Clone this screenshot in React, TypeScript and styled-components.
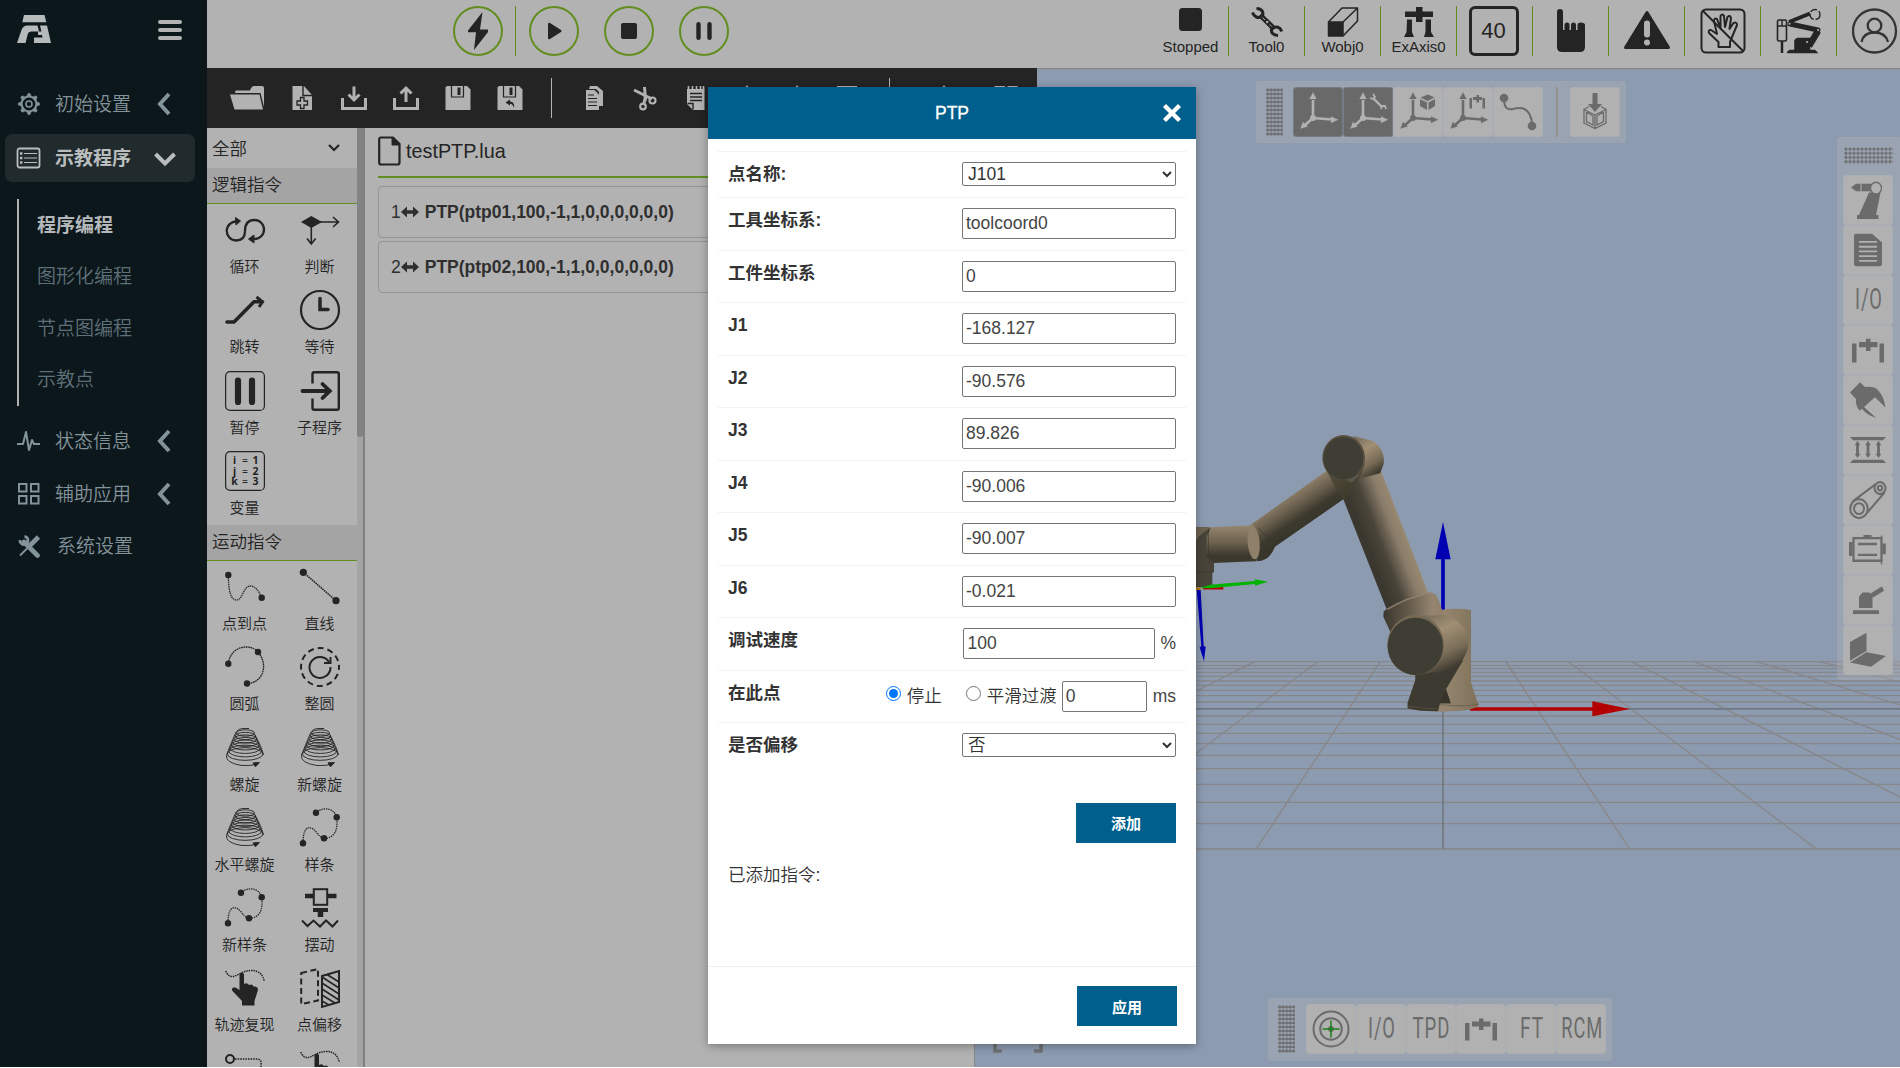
import React from "react";
import styled, { createGlobalStyle } from "styled-components";

const INK = "#242424";
const PANEL = "#b2b2b2";
const GREEN = "#628e20";
const BLUE = "#005f8c";
const ICON_GREY = "#6b6b6b";

const GlobalStyle = createGlobalStyle`
  * { box-sizing: border-box; }
  html, body { margin: 0; padding: 0; background: #fff; overflow: hidden; }
  body { font-family: "Liberation Sans", "Noto Sans CJK SC", sans-serif; color: ${INK}; }
`;

const Shell = styled.div`
  display: flex;
  width: 1900px;
  height: 1067px;
  overflow: hidden;
  position: relative;
`;

/* ---------- sidebar ---------- */
const Sidebar = styled.aside`
  width: 207px;
  flex: none;
  background: #0c171c;
  display: flex;
  flex-direction: column;
`;
const Brand = styled.div`
  height: 76px;
  padding: 15px 25px 0 17px;
  display: flex;
  justify-content: space-between;
  align-items: flex-start;
`;
const Burger = styled.div`
  margin-top: 5px;
  width: 24px;
  height: 20px;
  display: flex;
  flex-direction: column;
  justify-content: space-between;
  span { height: 4px; border-radius: 2px; background: #b2b2b2; }
`;
const NavItem = styled.div<{ $active?: boolean; $h: number }>`
  height: ${(p) => p.$h}px;
  margin: ${(p) => (p.$active ? 2 : 0)}px 12px 0 5px;
  padding-left: 11px;
  display: flex;
  align-items: center;
  border-radius: 7px;
  font-size: 19px;
  background: ${(p) => (p.$active ? "#212b2d" : "transparent")};
  color: ${(p) => (p.$active ? "#b9bdbe" : "#83939a")};
  font-weight: ${(p) => (p.$active ? 700 : 350)};
`;
const NavLabel = styled.span<{ $shift?: number }>`
  margin: -3px 0 0 ${(p) => 13 + (p.$shift || 0)}px;
  width: ${(p) => 98 - (p.$shift || 0)}px;
  white-space: nowrap;
`;
const SubNav = styled.div`
  margin: 17px 0 9px 17px;
  height: 207px;
  border-left: 2px solid #b2b2b2;
  padding: 1px 0 0 18px;
  display: flex;
  flex-direction: column;
`;
const SubItem = styled.div<{ $active?: boolean }>`
  height: 51.3px;
  line-height: 51px;
  font-size: 19px;
  color: ${(p) => (p.$active ? "#b4b8b9" : "#5f7178")};
  font-weight: ${(p) => (p.$active ? 700 : 350)};
`;

/* ---------- header ---------- */
const Main = styled.div`
  flex: 1;
  min-width: 0;
  display: flex;
  flex-direction: column;
`;
const Header = styled.header`
  height: 68px;
  flex: none;
  background: ${PANEL};
  display: flex;
  overflow: hidden;
  padding-top: 6px;
`;
const RunControls = styled.div`
  width: 946px;
  flex: none;
  padding-left: 246px;
  display: flex;
  height: 50px;
`;
const RoundButton = styled.div<{ $gap: number }>`
  width: 50px;
  height: 50px;
  flex: none;
  margin-left: ${(p) => p.$gap}px;
  border: 2px solid ${GREEN};
  border-radius: 50%;
  display: flex;
  align-items: center;
  justify-content: center;
`;
const GreenRule = styled.div`
  width: 1px;
  height: 50px;
  margin-left: 12px;
  background: ${GREEN};
`;
const StatusItem = styled.div<{ $last?: boolean }>`
  width: 76px;
  height: 50px;
  flex: none;
  display: flex;
  flex-direction: column;
  align-items: center;
  border-right: 1px solid ${(p) => (p.$last ? "transparent" : GREEN)};
  font-size: 15px;
`;
const StatusIcon = styled.div<{ $h: number }>`
  height: ${(p) => p.$h}px;
  display: flex;
  align-items: center;
  justify-content: center;
`;
const StatusText = styled.div`
  line-height: 19px;
  white-space: nowrap;
`;
const SpeedBox = styled.div`
  width: 50px;
  height: 50px;
  margin-right: 2px;
  border: 3px solid ${INK};
  border-radius: 6px;
  font-size: 22px;
  line-height: 43px;
  text-align: center;
`;

/* ---------- workspace ---------- */
const Workspace = styled.div`
  flex: 1;
  min-height: 0;
  display: flex;
`;
const Editor = styled.section`
  width: 768px;
  flex: none;
  display: flex;
  flex-direction: column;
  position: relative;
  z-index: 1;
`;
const Toolbar = styled.div`
  width: 830px;
  height: 60px;
  flex: none;
  background: ${INK};
  padding: 0 0 1px 14px;
  display: flex;
  align-items: center;
`;
const Tool = styled.div<{ $w: number }>`
  width: ${(p) => p.$w}px;
  flex: none;
  display: flex;
  justify-content: center;
`;
const ToolRule = styled.div`
  width: 1px;
  height: 40px;
  background: ${PANEL};
`;
const EditorBody = styled.div`
  flex: 1;
  min-height: 0;
  display: flex;
  background: ${PANEL};
  border-right: 1px solid #868686;
`;
const Palette = styled.div`
  width: 150px;
  flex: none;
  overflow: hidden;
`;
const Filter = styled.div`
  height: 40px;
  padding: 0 17px 2px 5px;
  display: flex;
  align-items: center;
  justify-content: space-between;
  font-size: 17.5px;
  font-weight: 350;
  svg { margin-top: 2px; }
`;
const SectionTitle = styled.div`
  height: 36px;
  padding-left: 5px;
  line-height: 34px;
  font-size: 17.5px;
  font-weight: 350;
  background: #a4a4a4;
  border-bottom: 1px solid ${GREEN};
`;
const Blocks = styled.div`
  display: grid;
  grid-template-columns: 75px 75px;
  grid-auto-rows: 80.25px;
`;
const Block = styled.div`
  display: flex;
  flex-direction: column;
  align-items: center;
  padding-top: 6px;
  font-size: 15px;
  font-weight: 350;
  line-height: 20px;
  white-space: nowrap;
  gap: 7px;
`;
const ScrollTrack = styled.div`
  width: 8px;
  flex: none;
  background: #a4a4a4;
  border-right: 2px solid #7f7f7f;
`;
const ScrollThumb = styled.div`
  height: 309px;
  width: 6px;
  background: #838383;
  border-radius: 0 0 3px 3px;
`;
const Program = styled.div`
  flex: 1;
  padding-left: 13px;
`;
const FileTab = styled.div`
  height: 50px;
  border-bottom: 2px solid ${GREEN};
  display: flex;
  align-items: center;
  gap: 4px;
  font-size: 19.8px;
  padding-bottom: 2px;
`;
const CodeLine = styled.div`
  height: 52px;
  margin-top: 3px;
  border: 1px solid #93939b;
  border-radius: 4px;
  display: flex;
  align-items: center;
  padding-left: 12px;
  font-size: 17.5px;
  color: #2f2f2f;
  &:first-of-type { margin-top: 0; }
  svg { margin-right: 6px; }
`;
const Lines = styled.div`
  padding-top: 8px;
`;

/* ---------- 3D view ---------- */
const Viewport = styled.section`
  flex: 1;
  position: relative;
  background: #8d9bb1;
  border-top: 1px solid #858585;
  overflow: hidden;
`;
const Scene = styled.svg`
  display: block;
`;
const FloatBar = styled.div<{ $x: number; $y: number; $w: number; $h: number; $col?: boolean }>`
  position: absolute;
  left: ${(p) => p.$x}px;
  top: ${(p) => p.$y}px;
  width: ${(p) => p.$w}px;
  height: ${(p) => p.$h}px;
  background: rgba(178, 178, 178, 0.35);
  border-radius: 3px;
  display: flex;
  flex-direction: ${(p) => (p.$col ? "column" : "row")};
  padding: ${(p) => (p.$col ? "10px 0 0 6px" : "6px 0 0 10px")};
`;
const Grip = styled.div<{ $col?: boolean; $gap?: number }>`
  flex: none;
  width: ${(p) => (p.$col ? 49 : 17)}px;
  height: ${(p) => (p.$col ? 17 : 48)}px;
  margin: ${(p) => (p.$col ? "0 0 11px 1px" : `1px ${p.$gap || 10}px 0 0`)};
  background-image: radial-gradient(circle at 50% 50%, #707072 1.3px, transparent 1.9px);
  background-size: ${(p) => (p.$col ? "4px 4.2px" : "3.5px 4px")};
`;
const Key = styled.div<{ $on?: boolean; $tall?: boolean }>`
  width: 50px;
  height: 50px;
  flex: none;
  border: 1px solid ${(p) => (p.$on ? "#777b83" : "#abaeb3")};
  border-radius: 3px;
  background: ${(p) => (p.$on ? "#696969" : "#b1b1b1")};
  color: ${ICON_GREY};
  display: flex;
  align-items: center;
  justify-content: center;
  svg { transform: ${(p) => (p.$tall ? "scaleY(1.08)" : "none")}; }
`;
const KeyRule = styled.div`
  width: 2px;
  height: 50px;
  margin: 0 12px 0 13px;
  background: #93918f;
`;
const KeyText = styled.span<{ $sx: number }>`
  font-family: Roboto, "Liberation Sans", sans-serif;
  font-size: 29.5px;
  line-height: 1;
  letter-spacing: 1.5px;
  padding-left: 3px;
  transform: scaleX(${(p) => p.$sx});
`;

/* ---------- dialog ---------- */
const Dialog = styled.div`
  position: absolute;
  left: 708px;
  top: 87px;
  width: 488px;
  height: 957px;
  z-index: 5;
  background: #fff;
  box-shadow: 0 2px 9px rgba(0, 0, 0, 0.32);
  color: #333;
  font-size: 17.5px;
  display: flex;
  flex-direction: column;
`;
const DialogHead = styled.div`
  height: 52px;
  flex: none;
  background: ${BLUE};
  color: #fff;
  display: grid;
  grid-template-columns: 48px 1fr 48px;
  align-items: center;
  text-align: center;
  -webkit-text-stroke: 0.3px #fff;
  svg { justify-self: center; }
`;
const Form = styled.div`
  flex: 1;
  padding: 11.6px 10px 0;
`;
const Row = styled.div<{ $h?: number }>`
  height: ${(p) => p.$h || 52.5}px;
  border-top: 1px solid #f3f3f3;
  padding: 10px 10px 0;
  display: flex;
  justify-content: space-between;
`;
const Label = styled.label`
  font-weight: 700;
  line-height: 25px;
`;
const Input = styled.input<{ $w?: number }>`
  width: ${(p) => p.$w || 214}px;
  height: 31px;
  border: 1px solid #767676;
  border-radius: 2px;
  padding: 0 3px;
  font: inherit;
  color: #444;
  background: #fff;
  outline: none;
`;
const Select = styled.select`
  width: 214px;
  height: 24px;
  border: 1px solid #767676;
  border-radius: 2px;
  padding: 0 0 2px 1px;
  font: inherit;
  font-weight: 350;
  color: #333;
  background-color: #fff;
`;
const Field = styled.div`
  display: flex;
  align-items: flex-start;
  line-height: 31px;
  font-weight: 350;
`;
const Unit = styled.span<{ $l: number }>`
  margin-left: ${(p) => p.$l}px;
  color: #444;
`;
const Radio = styled.input`
  width: 15px;
  height: 15px;
  margin: 5px 6px 0 0;
`;
const Button = styled.button`
  width: 100px;
  height: 40px;
  border: 0;
  padding: 0;
  background: ${BLUE};
  color: #fff;
  font: 700 15px "Liberation Sans", "Noto Sans CJK SC", sans-serif;
`;
const AddRow = styled.div`
  display: flex;
  justify-content: flex-end;
  padding: 28px 10px 0;
`;
const Added = styled.div`
  padding: 19px 10px 0;
  line-height: 26px;
  font-weight: 350;
`;
const DialogFoot = styled.div`
  height: 78px;
  flex: none;
  border-top: 1px solid #f1f1f1;
  padding: 19px 19px 0 0;
  display: flex;
  justify-content: flex-end;
`;

/* ---------- icons ---------- */
type IconProps = { w: number; h?: number; children: React.ReactNode };
const Icon = ({ w, h = w, children }: IconProps) => (
  <svg width={w} height={h} viewBox={`0 0 ${w} ${h}`} fill="none" stroke="currentColor">
    {children}
  </svg>
);

const Chevron = ({ down }: { down?: boolean }) => (
  <Icon w={24}>
    <path d={down ? "M2.500 8 L12 17.500 L21.500 8" : "M16 2 L7 12 L16 22"} strokeWidth="4" />
  </Icon>
);

const Gear = () => (
  <Icon w={26} h={24}>
    <circle cx="13" cy="12" r="7.4" strokeWidth="2" />
    <circle cx="13" cy="12" r="3" strokeWidth="1.6" />
    {[0, 45, 90, 135, 180, 225, 270, 315].map((a) => (
      <path key={a} d="M10.8 4.6 L12 1.4 H14 L15.2 4.6z" fill="currentColor" strokeWidth=".6" transform={`rotate(${a} 13 12)`} />
    ))}
  </Icon>
);
const ListIcon = () => (
  <Icon w={26} h={22}>
    <rect x="1.5" y="1.5" width="22" height="19" rx="2" strokeWidth="1.8" />
    <path d="M8 6.5 H21 M8 11 H21 M8 15.5 H21" strokeWidth="1" />
    <path d="M4 6.5 h2.4 M4 11 h2.4 M4 15.5 h2.4" strokeWidth="2.4" />
  </Icon>
);
const Pulse = () => (
  <Icon w={26} h={24}>
    <path d="M1 15 H7 L10 3 L13 21 L16 11 L18 15 H24" strokeWidth="2" strokeLinejoin="round" />
  </Icon>
);
const Tiles = () => (
  <Icon w={26} h={24}>
    {[[3, 2], [15, 2], [3, 14], [15, 14]].map(([x, y]) => (
      <rect key={`${x}-${y}`} x={x} y={y} width="7.5" height="7.5" strokeWidth="2" />
    ))}
  </Icon>
);
const Tools = () => (
  <Icon w={26} h={24}>
    <path d="M8 8 L21.500 21.500" strokeWidth="4.600" strokeLinecap="round" />
    <path d="M4 6 A4 4 0 1 0 8.500 2.500" strokeWidth="3" />
    <path d="M4 21.500 L13 12.500" strokeWidth="1.800" />
    <path d="M13.500 12 L22.500 3" strokeWidth="4.600" />
  </Icon>
);

const Logo = () => (
  <svg width="34" height="28" viewBox="0 0 34 28" fill="#b6babb">
    <path d="M7 0 H27.500 L29.300 7.300 H5.300z" />
    <path d="M0 28 L4.500 15 Q6 10.500 10.500 10.500 H20.500 L22 16.500 H14 Q11.500 16.500 10.800 19 L8.500 28z" />
    <path d="M23 10.500 H30 L34 28 H17 V22.500 H25.500 L25 20 H21 V16.500 H24.400z" />
  </svg>
);

const Bolt = () => (
  <svg width="24" height="38" viewBox="0 0 24 38" fill={INK}>
    <path d="M16.5 0 L2 18.5 V20.3 H10 L8 38 L22 20 V17.6 H14z" />
  </svg>
);

const Wrench = () => (
  <svg width="32" height="30" viewBox="0 0 32 30" fill="none" stroke={INK}>
    <path d="M9 8 L23.500 22" strokeWidth="5.200" />
    <path d="M5.500 1.500 Q13.500 2 11.500 9.500 Q4 12.500 1.500 5.500" strokeWidth="3" />
    <path d="M27 28.500 Q19.500 28 20.500 21.500 Q28 17.500 30.800 24.500" strokeWidth="3" />
    <circle cx="16.200" cy="15" r="1.200" fill={PANEL} stroke="none" />
    <path d="M11.500 10.700 l2.500 2.300 M18.700 17.500 l2 2" stroke={PANEL} strokeWidth="1" />
  </svg>
);
const Cube = () => (
  <svg width="32" height="30" viewBox="0 0 32 30" fill="none" stroke={INK} strokeWidth="1.5" strokeLinejoin="round">
    <path d="M1.5 15 H16 V29 H1.5z" fill={INK} />
    <path d="M1.5 15 L15 1 H30.5 L16 15 M30.5 1 V14 L16 29" />
  </svg>
);
const Gantry = () => (
  <svg width="32" height="30" viewBox="0 0 32 30" fill={INK}>
    <path d="M2 4.5 H13 V0 H19.5 V4.5 H30 V10 H19.5 V15 H13 V10 H2z" />
    <path d="M4 12.5 H9 V25 L11 30 H1 L3.5 25z M22.5 12.5 H28 V25 L31 30 H21 L22.5 25z" />
  </svg>
);
const PointHand = () => (
  <svg width="30" height="46" viewBox="0 0 30 46" fill={INK}>
    <path d="M1 4 Q1 1 4 1 Q7 1 7 4 V22 H8.5 V17 Q8.500 14.500 11 14.500 Q13.500 14.500 13.500 17 V22 H15 V17 Q15 14.500 17.500 14.500 Q20 14.500 20 17 V22 H21.500 V17 Q21.500 14.500 24.500 14.500 Q29 14.500 29 17 V39 Q29 44 24 44 H6 Q1 44 1 39z" />
  </svg>
);
const Warning = () => (
  <svg width="48" height="40" viewBox="0 0 48 40">
    <path d="M24 2.500 L45.500 37.500 H2.500z" fill={INK} stroke={INK} strokeWidth="3" strokeLinejoin="round" />
    <rect x="21" y="10.500" width="6" height="17" rx="3" fill={PANEL} />
    <circle cx="24" cy="32.500" r="3" fill={PANEL} />
  </svg>
);
const NoHand = () => (
  <svg width="46" height="46" viewBox="0 0 46 46" fill="none" stroke={INK} strokeWidth="2" strokeLinejoin="round">
    <rect x="1.500" y="1.500" width="43" height="43" rx="4.500" />
    <path d="M18.500 39 V34 L9 25 Q8 21.500 11 22 L17 26 L14 13 Q14 9.500 17 11 L20.500 20 L20.500 8 Q22.500 5 24 8 L25 19 L27.500 9 Q30 6.500 31 10 L29.500 21 L33.500 15 Q37 13.500 37 17 L30 34 V39z" />
    <path d="M2.500 2.500 L43.500 43.500" />
  </svg>
);
const ArmIcon = () => (
  <svg width="46" height="46" viewBox="0 0 46 46" fill={INK} stroke={INK}>
    <rect x="1.500" y="12" width="9" height="21" rx="1.500" fill="none" strokeWidth="1.600" />
    <path d="M1.500 18 H10.500 M6 12 V18" strokeWidth="1.400" fill="none" />
    <path d="M6 33 V45" strokeWidth="2.500" />
    <path d="M13 14 L34 5.500" strokeWidth="4" />
    <path d="M14 16 L42 22" strokeWidth="5" strokeLinecap="round" />
    <path d="M42 23 L33 38" strokeWidth="6.500" />
    <circle cx="39" cy="6.500" r="5" fill="none" strokeWidth="1.400" strokeDasharray="7 2" />
    <path d="M18.500 32 L21 30 H34 V42 H18.500z M12 43 L14 42 H39 L42 45 H11z" strokeWidth=".5" />
    <path d="M13.500 15.800 h.1 M42 22 h.1 M31 34 h.1" stroke={PANEL} strokeWidth="2" strokeLinecap="round" />
  </svg>
);
const User = () => (
  <svg width="46" height="46" viewBox="0 0 46 46" fill="none" stroke="#333" strokeWidth="2.300">
    <circle cx="22.500" cy="23" r="21.500" />
    <circle cx="22.500" cy="17.500" r="6.800" />
    <path d="M9.500 34 Q11.500 24.500 22.500 24.500 Q33.500 24.500 36 34" />
  </svg>
);

/* editor toolbar icons share a 34x26 frame */
const TB = ({ children }: { children: React.ReactNode }) => (
  <svg width="34" height="26" viewBox="0 0 34 26" fill={PANEL} stroke="none">
    {children}
  </svg>
);
const Disk = ({ undo }: { undo?: boolean }) => (
  <TB>
    <path d="M6 1 H26 L29.500 4.500 V25 H4.500 V2.500z" />
    <path d="M10.500 1 V12 H22.500 V1" fill="none" stroke={INK} strokeWidth="1.200" />
    <path d="M16.500 2.500 H19.500 V10 H16.500z" fill={INK} />
    {undo && <path d="M12.500 17.500 L17 14.500 V16.500 Q22 17 21 23 Q20 19 17 18.800 V20.500z" fill={INK} />}
  </TB>
);
const Tray = ({ up }: { up?: boolean }) => (
  <TB>
    <path d="M5.500 13 V23.500 H28.500 V13" fill="none" stroke={PANEL} strokeWidth="3" />
    <path
      d={up ? "M17 17 V5 M11.500 8.500 L17 3 L22.500 8.500" : "M17 1.500 V14 M11.500 9.500 L17 15 L22.500 9.500"}
      fill="none"
      stroke={PANEL}
      strokeWidth="3"
    />
  </TB>
);

/* palette block icons use a 40x40 frame */
const BI = ({ children, sw = 2 }: { children: React.ReactNode; sw?: number }) => (
  <svg width="40" height="40" viewBox="0 0 40 40" fill="none" stroke={INK} strokeWidth={sw} overflow="visible">
    {children}
  </svg>
);
const Dots = ({ at, r = 3.2 }: { at: number[][]; r?: number }) => (
  <>
    {at.map(([x, y]) => (
      <circle key={`${x},${y}`} cx={x} cy={y} r={r} fill={INK} stroke="none" />
    ))}
  </>
);
const Spiral = () => (
  <BI sw={0.9}>
    {[0, 1, 2, 3, 4, 5, 6, 7].map((i) => (
      <ellipse key={i} cx={20.5 - i * 0.05} cy={5 + i * 3} rx={9 + i * 1.25} ry={3.2 + i * 0.45} />
    ))}
    <path d="M11.500 4 Q13 .5 19 .5 H24 M11 4 Q5 18 1.500 27 M1.500 27 Q0 35 17 37.500 Q26 38 33 36 M30 7 Q37 20 38.500 27" />
    <path d="M34.500 34.500 L28 34.800 L30.500 38.800z" fill={INK} />
  </BI>
);
const Spline = () => (
  <BI sw={1.3}>
    <path strokeDasharray="1.400 .9" d="M3 35 C3 15 12 18 17 25 C20 29 22 30 24 30.300 C36 30 38 20 36.700 9.300 C34 -1 22 -1 16 4.700" />
    <Dots at={[[16, 4.7], [36.7, 9.3], [24, 30.3], [3, 35.3]]} />
  </BI>
);
const TraceHand = () => (
  <BI sw={1.5}>
    <path strokeDasharray="1.500 .9" d="M.8 3 C4 11 9 9 16 5 C27 0 37 2 39.200 13" />
    <path
      fill={INK}
      stroke="none"
      d="M14.500 6 Q16.800 3.500 19 6 V16 Q22 14 24 17 Q27.500 15.500 28.500 18.500 Q33 18 33 22 L29.500 33 V37.500 H17 V33 L7.500 23 Q6 20.500 8.500 19.500 Q10 18.800 14.500 22z"
    />
  </BI>
);

const logic: [string, React.ReactNode][] = [
  ["循环", <BI sw={2.3}><path d="M11.500 11.500 A9.500 9.500 0 1 0 11 30.500 C17 30.500 20 27 20 21 C20 14 23.500 10 29.500 10 A9.500 9.500 0 0 1 29.500 29 H28" /><path d="M10.500 7.500 L15.500 11 L11 15z M29 25 L23.500 29 L29 33z" fill={INK} strokeWidth="1" /></BI>],
  ["判断", <BI sw={1.6}><path d="M1 12 L11.300 6 L22 12 L11.300 18z" fill={INK} strokeWidth="0" /><path d="M20 12 H38.500 M33 7 L38.500 12 L33 17 M11.300 17 V33.500 M7 28.500 L11.300 34 L15.600 28.500" /></BI>],
  ["跳转", <BI sw={3.6}><path d="M2 32 H9 L29 11.800 H37" strokeLinecap="round" strokeLinejoin="round" /><path d="M31.500 7 L37.500 11.800 L34 17" strokeWidth="3" /></BI>],
  ["等待", <BI sw={2.2}><circle cx="20" cy="20" r="19" /><path d="M20 8.500 V19.500 H28" strokeWidth="3.500" strokeLinecap="round" /></BI>],
  ["暂停", <BI sw={1.2}><rect x=".6" y=".6" width="38.800" height="38.800" rx="4.500" /><path d="M13 9.500 V31 M27 9.500 V31" strokeWidth="6.200" strokeLinecap="round" /></BI>],
  ["子程序", <BI sw={2.4}><path d="M12.500 12.500 V3 Q12.500 1.200 14.500 1.200 H37 Q38.800 1.200 38.800 3 V37 Q38.800 38.800 37 38.800 H14.500 Q12.500 38.800 12.500 37 V27.500" /><path d="M2.500 20 H29 M22.500 13 L29.800 20 L22.500 27" strokeWidth="3.800" strokeLinecap="round" /></BI>],
  ["变量", <BI sw={1.2}><rect x=".6" y=".6" width="38.800" height="38.800" rx="4.500" />
    <g fill={INK} stroke="none" fontFamily="'Noto Sans', sans-serif" fontWeight="700" fontSize="10.500" textAnchor="middle">
      {["i=1", "j=2", "k=3"].map((t, i) => (
        <g key={t}>
          <text x="9.500" y={13 + i * 10.7}>{t[0]}</text>
          <text x="20" y={13 + i * 10.7} fontWeight="400">{t[1]}</text>
          <text x="30.500" y={13 + i * 10.7}>{t[2]}</text>
        </g>
      ))}
    </g></BI>],
];

const motion: [string, React.ReactNode][] = [
  ["点到点", <BI sw={1.3}><path strokeDasharray="1.400 .8" d="M3.300 8 C3.500 22 5 33 11.700 33 C18 33 18 19 25.500 19 C30 19 34 24 36.700 30.700" /><Dots at={[[3.3, 8], [36.7, 30.7]]} /></BI>],
  ["直线", <BI sw={1.5}><path strokeDasharray="1.600 .7" d="M3.300 5.300 L36 33.700" /><Dots r={3.6} at={[[3.3, 5.3], [36, 33.7]]} /></BI>],
  ["圆弧", <BI sw={1.3}><path strokeDasharray="1.800 .6" d="M3.300 16.700 C6 -3 27 -3 33 5 C44 18 38 36 22 36.500" /><Dots at={[[3.3, 16.7], [33, 5], [22, 36.5]]} /></BI>],
  ["整圆", <BI sw={2}><circle cx="20" cy="20" r="19" strokeDasharray="6 3.950" strokeDashoffset="3" /><path d="M29 15 A10.500 10.500 0 1 0 30.500 20" /><path d="M30.500 10 V16 H24" /></BI>],
  ["螺旋", <Spiral />],
  ["新螺旋", <Spiral />],
  ["水平螺旋", <Spiral />],
  ["样条", <Spline />],
  ["新样条", <Spline />],
  ["摆动", <BI><rect x="13.800" y="1.200" width="13.400" height="15.600" /><path d="M5 8 H13 M28 8 H36.500" strokeWidth="4.600" /><path d="M13 22 H28" strokeWidth="4" /><path d="M20.500 24 V29" strokeWidth="5.500" /><path d="M2 32.500 L7.500 38 L13.500 32.500 L20 38.500 L26 32.500 L32.500 38.500 L38 32.500" /></BI>],
  ["轨迹复现", <TraceHand />],
  ["点偏移", <BI><path d="M1.200 5 L18 1 V32.500 L1.200 36z" strokeDasharray="6 3.500" /><path d="M22 8 L39 3 V34 L22 39z" /><path strokeWidth="1.600" d="M27 6.500 L39 14 M22 9 L39 20 M22 15 L39 26 M22 21 L39 32 M22 27 L35 35 M22 33 L29 37" /></BI>],
  ["", <BI sw={1.5}><circle cx="5" cy="10" r="4" strokeWidth="2" /><path strokeDasharray="1.600 1" d="M10 10 H33 Q37 11 36 16 V28" /></BI>],
  ["", <TraceHand />],
];

/* floating key icons */
const axes = (c: string) => (
  <g stroke={c} fill={c}>
    <path d="M18 28 V10 M18 28 L37 29.500 M18 28 L9 36" strokeWidth="2.600" />
    <path d="M18 2.500 L21.500 9 H14.500z M43 29.800 L36 33 V26.500z M5.500 38.500 L8 32 L12.500 36.500z" strokeWidth=".2" />
    <circle cx="18" cy="28" r="3" strokeWidth="0" />
  </g>
);
const KI = ({ children, w = 46, h = 44 }: { children: React.ReactNode; w?: number; h?: number }) => (
  <svg width={w} height={h} viewBox={`0 0 ${w} ${h}`} fill="none" stroke={ICON_GREY}>
    {children}
  </svg>
);
const GantryKey = () => (
  <KI w={36} h={26}>
    <path d="M2 7 H6.500 V24.500 H2z M29.500 7 H34 V24.500 H29.500z M9 5.500 H16 V2.500 H20.500 V5.500 H27.500 V10.500 H20.500 V14 H16 V10.500 H9z" fill={ICON_GREY} stroke="none" />
  </KI>
);

const sideKeys: React.ReactNode[] = [
  <KI w={36} h={36}><path d="M1 6.500 L6 3 H22 V10 H6z M19 11 L30.500 11 L26 32 H28.500 V35.500 H7 V32 H9z" fill={ICON_GREY} stroke="none" /><circle cx="26" cy="7" r="5.500" fill="#b1b1b1" strokeWidth="1.300" /><path d="M11 3 V10" stroke="#b1b1b1" /></KI>,
  <KI w={30} h={32}><path d="M3 1 H19 L29 9 V29 Q29 31 27 31 H3 Q1 31 1 29 V3 Q1 1 3 1z" fill={ICON_GREY} stroke="none" /><path d="M6 8.500 H24 M6 13 H24 M6 17.300 H24 M6 21.600 H24 M6 26 H24" stroke="#b1b1b1" strokeWidth="1.700" /></KI>,
  <KeyText $sx={0.62}>I/O</KeyText>,
  <GantryKey />,
  <KI w={38} h={36}><path d="M1 11 L11 1.500 L16 6 Q26 5 29.500 9.500 Q35 15 36.500 25 L26 15.500 L15 24.500 L27 34.500 Q18 32 13 26 L10.500 28 Q6 22 7 17z" fill={ICON_GREY} stroke="none" /></KI>,
  <KI w={36} h={26}><path d="M0 1 H36 L33 4 H3z M0 25 H36 L33 22 H3z" fill={ICON_GREY} stroke="none" />{[7.5, 18, 28.5].map((x) => <path key={x} d={`M${x} 4.500 l2.800 4 h-1.400 v8 h1.400 l-2.800 4 l-2.800 -4 h1.400 v-8 h-1.400z`} fill={ICON_GREY} stroke="none" />)}</KI>,
  <KI w={38} h={36}><g strokeWidth="2"><circle cx="10" cy="26" r="8.800" /><circle cx="10" cy="26" r="5" /><circle cx="31" cy="7" r="5.500" /><circle cx="31" cy="7" r="2.200" /><path d="M4 19 L27 3 M18 30 L35.500 11" /></g></KI>,
  <KI w={38} h={30}><path d="M4.500 4 H32.500 V25 H4.500z M9 9.500 H28 M9 19.500 H28" strokeWidth="2.200" /><path d="M32.500 1.500 V28.500" strokeWidth="1.300" /><path d="M1.800 7.500 V20.500 M35 9 V19" strokeWidth="3.600" /><path d="M14.500 2.500 H22.500" strokeWidth="3" /></KI>,
  <KI w={34} h={28}><path d="M8 21.500 V11 L11.500 7 H18.500 L21.500 11 V21.500z M2 23.500 H28 V27 H2z" fill={ICON_GREY} stroke="none" /><path d="M20.500 10 L32 3.500" strokeWidth="4.400" /></KI>,
  <KI w={38} h={34}><path d="M1 9.500 L17.500 1 V18 L1 27z M1 28.500 L17.500 19 L37 22.500 L22 32.500z" fill={ICON_GREY} stroke="none" /></KI>,
];

const rowLines = [785, 797, 806, 817, 829, 843, 856, 871, 887, 906, 948, 973, 1000, 1031, 1066, 1106, 1153, 1207, 1271, 1347];
const fan = Array.from({ length: 21 }, (_, i) => i - 10).filter((k) => k !== 0);

const RobotScene = () => (
  <Scene width="925" height="998" viewBox="975 69 925 998">
    <defs>
      <linearGradient id="upper" gradientUnits="userSpaceOnUse" x1="560" y1="435" x2="690" y2="385">
        <stop offset="0" stopColor="#3a372e" /><stop offset=".3" stopColor="#4a453a" /><stop offset=".65" stopColor="#8b7d6b" /><stop offset="1" stopColor="#a08f74" />
      </linearGradient>
      <linearGradient id="fore" gradientUnits="userSpaceOnUse" x1="320" y1="290" x2="375" y2="375">
        <stop offset="0" stopColor="#8d7f68" /><stop offset=".4" stopColor="#665c4b" /><stop offset=".75" stopColor="#3c392e" /><stop offset="1" stopColor="#38352b" />
      </linearGradient>
      <linearGradient id="wrist" x1="0" y1="0" x2="0" y2="1">
        <stop offset="0" stopColor="#95866f" /><stop offset=".45" stopColor="#6d6350" /><stop offset=".8" stopColor="#3b382d" />
      </linearGradient>
      <linearGradient id="joint" x1=".1" y1=".1" x2=".5" y2="1">
        <stop offset="0" stopColor="#7d7260" /><stop offset=".3" stopColor="#a18f73" /><stop offset=".7" stopColor="#796d58" /><stop offset="1" stopColor="#3c382e" />
      </linearGradient>
      <linearGradient id="collar" x1="0" y1="0" x2="1" y2="0">
        <stop offset="0" stopColor="#3b382e" /><stop offset=".4" stopColor="#63594a" /><stop offset=".8" stopColor="#958570" /><stop offset="1" stopColor="#8e7e66" />
      </linearGradient>
      <linearGradient id="foot" x1="0" y1="0" x2="1" y2="0">
        <stop offset="0" stopColor="#807360" /><stop offset=".5" stopColor="#96866f" /><stop offset="1" stopColor="#7f7159" />
      </linearGradient>
    </defs>
    <g stroke="#878689" strokeWidth="1.300">
      {rowLines.map((y) => <path key={y} d={`M975 ${400 + y / 3} H1900`} />)}
      {fan.map((k) => <path key={k} d={`M${1443 + 62.8 * k} 661.700 L${1443 + 186.7 * k} 849`} />)}
    </g>
    <path d="M975 708.800 H1900 M1443 661 V849" stroke="#727880" strokeWidth="1.700" />
    <g transform="translate(1180 400) scale(.33333)">
      <path d="M789 635 V470" stroke="#0000b3" strokeWidth="11" />
      <path d="M789 366 L812 478 H766z" fill="#0000b3" />
      <path d="M870 927 H1240" stroke="#b30000" strokeWidth="11" />
      <path d="M1350 927 L1237 904 V949z" fill="#b30000" />
      {/* base */}
      <path d="M780 630 Q830 622 873 630 V848 L896 918 Q880 932 789 935 Q710 935 683 925 V908 L706 840 V780z" fill="url(#foot)" />
      <path d="M706 800 L850 780 L798 868 L812 910 H780 L774 934 Q710 934 683 925 V908 L706 840z" fill="#3d3b31" />
      <path d="M798 868 L812 910 H778z" fill="#36342b" />
      <path d="M683 918 Q740 928 776 926 M778 914 Q860 922 896 912" stroke="#5d5444" strokeWidth="2" fill="none" />
      {/* forearm and wrist */}
      <path d="M210 376 L440 212 L520 250 L490 298 L285 440 Q268 484 230 484z" fill="url(#fore)" />
      <path d="M40 384 L222 376 Q245 430 228 484 L100 489 L40 470z" fill="url(#wrist)" />
      <ellipse cx="221" cy="428" rx="18" ry="50" fill="#8f8069" transform="rotate(-5 221 428)" />
      <path d="M40 382 Q75 380 92 384 L80 410 V470 L102 489 V516 L97 518 V556 L80 561 H40z" fill="#48443a" />
      <path d="M40 382 Q75 380 92 384 Q50 405 40 440z" fill="#6c6250" />
      <path d="M86 388 Q82 430 90 487 M40 516 H100 M236 384 L284 440" stroke="#38352b" strokeWidth="2" fill="none" />
      {/* upper arm */}
      <path d="M490 270 L540 225 L602 210 L745 580 L620 628 L490 298z" fill="url(#upper)" />
      <path d="M520 108 L580 124 Q616 150 611 192 L600 220 L538 236z" fill="url(#joint)" />
      <path d="M440 212 L555 190 L538 236 L490 298 L470 270z" fill="#45402f" opacity=".75" />
      <ellipse cx="491" cy="173" rx="64" ry="68" fill="#5a5142" />
      <ellipse cx="490" cy="175" rx="60" ry="64" fill="#3f3e34" />
      <path d="M536 236 Q570 220 600 220" stroke="#5b5141" strokeWidth="2" fill="none" />
      {/* shoulder */}
      <path d="M611 634 Q670 590 750 577 Q768 580 775 598 L795 655 L640 715 L610 650z" fill="url(#collar)" />
      <path d="M622 628 Q680 592 752 579" stroke="#958775" strokeWidth="5" fill="none" opacity=".8" />
      <path d="M705 647 L795 645 Q862 668 866 725 Q862 800 780 815 L700 824z" fill="url(#joint)" />
      <ellipse cx="707" cy="735" rx="85" ry="90" fill="#766a55" />
      <ellipse cx="706" cy="739" rx="83" ry="86" fill="#3f3e34" />
      {/* tool frame */}
      <path d="M70 565 H130" stroke="#b30000" strokeWidth="7" />
      <path d="M60 564 L90 554 L225 543 L224 538 L264 545 L225 557 V552 L90 565z" fill="#00b300" />
      <path d="M50 567 L62 571 L71 738 L77 740 L72 784 L59 742 L64 739z" fill="#0000b3" />
      <rect x="40" y="562" width="22" height="8" fill="#b37700" />
    </g>
    <path d="M995 1020 V1051 H1002 M1041 1020 V1051 H1034" fill="none" stroke="#6f7175" strokeWidth="3.600" />
  </Scene>
);

const joints: [string, string][] = [
  ["工具坐标系:", "toolcoord0"],
  ["工件坐标系", "0"],
  ["J1", "-168.127"],
  ["J2", "-90.576"],
  ["J3", "89.826"],
  ["J4", "-90.006"],
  ["J5", "-90.007"],
  ["J6", "-0.021"],
];

const noop = () => {};

const PtpDialog = () => (
  <Dialog>
    <DialogHead>
      <span />
      <span>PTP</span>
      <svg width="20" height="20" viewBox="0 0 20 20" stroke="#fff" strokeWidth="4.300">
        <path d="M2.500 2.500 L17.500 17.500 M17.500 2.500 L2.500 17.500" />
      </svg>
    </DialogHead>
    <Form>
      <Row $h={46.5}>
        <Label>点名称:</Label>
        <Select defaultValue="J101"><option>J101</option></Select>
      </Row>
      {joints.map(([name, value]) => (
        <Row key={name}>
          <Label>{name}</Label>
          <Input value={value} onChange={noop} />
        </Row>
      ))}
      <Row>
        <Label>调试速度</Label>
        <Field>
          <Input $w={192} value="100" onChange={noop} />
          <Unit $l={5}>%</Unit>
        </Field>
      </Row>
      <Row>
        <Label>在此点</Label>
        <Field>
          <Radio type="radio" name="stop" checked onChange={noop} />
          <span>停止</span>
          <Unit $l={24} />
          <Radio type="radio" name="stop" checked={false} onChange={noop} />
          <span>平滑过渡</span>
          <Unit $l={5} />
          <Input $w={85} value="0" onChange={noop} />
          <Unit $l={6}>ms</Unit>
        </Field>
      </Row>
      <Row>
        <Label>是否偏移</Label>
        <Select defaultValue="否"><option>否</option></Select>
      </Row>
      <AddRow><Button>添加</Button></AddRow>
      <Added>已添加指令:</Added>
    </Form>
    <DialogFoot><Button>应用</Button></DialogFoot>
  </Dialog>
);

const SwapArrow = () => (
  <svg width="18" height="12" viewBox="0 0 18 12" fill="#2f2f2f">
    <path d="M0 6 L6 .5 V4.300 H12 V.5 L18 6 L12 11.500 V7.700 H6 V11.500z" />
  </svg>
);

export default function App() {
  return (
    <>
      <GlobalStyle />
      <Shell>
        <Sidebar>
          <Brand>
            <Logo />
            <Burger><span /><span /><span /></Burger>
          </Brand>
          <NavItem $h={56}><Gear /><NavLabel>初始设置</NavLabel><Chevron /></NavItem>
          <NavItem $h={48} $active><ListIcon /><NavLabel>示教程序</NavLabel><Chevron down /></NavItem>
          <SubNav>
            <SubItem $active>程序编程</SubItem>
            <SubItem>图形化编程</SubItem>
            <SubItem>节点图编程</SubItem>
            <SubItem>示教点</SubItem>
          </SubNav>
          <NavItem $h={52}><Pulse /><NavLabel>状态信息</NavLabel><Chevron /></NavItem>
          <NavItem $h={53}><Tiles /><NavLabel>辅助应用</NavLabel><Chevron /></NavItem>
          <NavItem $h={52}><Tools /><NavLabel $shift={2}>系统设置</NavLabel></NavItem>
        </Sidebar>

        <Main>
          <Header>
            <RunControls>
              <RoundButton $gap={0}><Bolt /></RoundButton>
              <GreenRule />
              <RoundButton $gap={13}>
                <svg width="18" height="20" viewBox="0 0 18 20"><path d="M3 3 Q3 1 5 2 L16 9 Q17.500 10 16 11 L5 18 Q3 19 3 17z" fill={INK} /></svg>
              </RoundButton>
              <RoundButton $gap={25}>
                <svg width="16" height="16" viewBox="0 0 16 16"><rect width="16" height="16" rx="2" fill={INK} /></svg>
              </RoundButton>
              <RoundButton $gap={25}>
                <svg width="16" height="18" viewBox="0 0 16 18"><path d="M2.500 2.200 V15.800 M13.500 2.200 V15.800" stroke={INK} strokeWidth="4.400" strokeLinecap="round" /></svg>
              </RoundButton>
            </RunControls>
            <StatusItem>
              <StatusIcon $h={34}><svg width="23" height="27" viewBox="0 0 23 27"><rect width="23" height="23" rx="3.500" fill={INK} /></svg></StatusIcon>
              <StatusText>Stopped</StatusText>
            </StatusItem>
            <StatusItem><StatusIcon $h={34}><Wrench /></StatusIcon><StatusText>Tool0</StatusText></StatusItem>
            <StatusItem><StatusIcon $h={34}><Cube /></StatusIcon><StatusText>Wobj0</StatusText></StatusItem>
            <StatusItem><StatusIcon $h={34}><Gantry /></StatusIcon><StatusText>ExAxis0</StatusText></StatusItem>
            <StatusItem><SpeedBox>40</SpeedBox></StatusItem>
            <StatusItem><StatusIcon $h={50}><PointHand /></StatusIcon></StatusItem>
            <StatusItem><StatusIcon $h={48}><Warning /></StatusIcon></StatusItem>
            <StatusItem><StatusIcon $h={49}><NoHand /></StatusIcon></StatusItem>
            <StatusItem><StatusIcon $h={49}><ArmIcon /></StatusIcon></StatusItem>
            <StatusItem $last><StatusIcon $h={49}><User /></StatusIcon></StatusItem>
          </Header>

          <Workspace>
            <Editor>
              <Toolbar>
                <Tool $w={52}><TB><path d="M5.500 5.500 H20 Q21.500 1 24 1 H32 Q34 1 34 3 V22 L30.500 8 H5z" /><path d="M0 9.500 H29.500 L33 24.500 H4.500z" /></TB></Tool>
                <Tool $w={58}><TB><path d="M7.500 1 H19 L27 10 V25 H7.500z" /><path d="M18 1 V10.500 H27" fill="none" stroke={INK} strokeWidth="1.400" /><path d="M15.500 12.500 H19 V16 H22.500 V20 H19 V23.500 H15.500 V20 H12 V16 H15.500z" fill={PANEL} stroke={INK} strokeWidth="1.300" /></TB></Tool>
                <Tool $w={45}><Tray /></Tool>
                <Tool $w={60}><Tray up /></Tool>
                <Tool $w={43}><Disk /></Tool>
                <Tool $w={61}><Disk undo /></Tool>
                <Tool $w={22}><ToolRule /></Tool>
                <Tool $w={64}>
                  <TB><path d="M13 1 H20 L26 6 V21 H22 V7 L19 4 H12z" /><path d="M9 5 H17.500 L22 9.500 V25 H9z" /><path d="M11 10 H17 M11 13.500 H20 M11 17 H20 M11 20.500 H20" stroke={INK} strokeWidth="1.100" /></TB>
                </Tool>
                <Tool $w={38}>
                  <TB><path d="M6 5 L24 14 M16.500 2 L17.500 14 L15 20" stroke={PANEL} strokeWidth="3" /><circle cx="24.500" cy="15.500" r="3" fill="none" stroke={PANEL} strokeWidth="2.200" /><circle cx="15" cy="21.500" r="2.800" fill="none" stroke={PANEL} strokeWidth="2.200" /></TB>
                </Tool>
                <Tool $w={64}>
                  <TB><path d="M8 4 H25.500 V25 H14 L8 19z" /><path d="M9.500 1 V5 M13.500 1 V5 M17.500 1 V5 M21.500 1 V5 M24.500 1 V5" stroke={PANEL} strokeWidth="1.600" /><path d="M11 8.500 H23 M11 12 H23 M11 15.500 H23" stroke={INK} strokeWidth="1.500" /><path d="M8.500 18.500 H14 V24.500" fill="none" stroke={INK} strokeWidth="1.400" /></TB>
                </Tool>
                <Tool $w={38}><TB><path d="M17 0 L22 7 H12z" /></TB></Tool>
                <Tool $w={62}><TB><path d="M17 0 L22 7 H12z" /></TB></Tool>
                <Tool $w={38}><TB><path d="M7 1 H27 V20 H7z" /></TB></Tool>
                <Tool $w={46}><ToolRule /></Tool>
                <Tool $w={64}><TB><path d="M17 0 L22 7 H12z" /></TB></Tool>
                <Tool $w={60}><TB><path d="M5.500 1 H16 V11 H5.500z M18.500 1 H28.500 V11 H18.500z" /></TB></Tool>
              </Toolbar>
              <EditorBody>
                <Palette>
                  <Filter>
                    <span>全部</span>
                    <svg width="12" height="8" viewBox="0 0 12 8" fill="none" stroke={INK} strokeWidth="2.200"><path d="M1 1 L6 6 L11 1" /></svg>
                  </Filter>
                  <SectionTitle>逻辑指令</SectionTitle>
                  <Blocks>
                    {logic.map(([name, icon]) => <Block key={name}>{icon}<span>{name}</span></Block>)}
                  </Blocks>
                  <SectionTitle>运动指令</SectionTitle>
                  <Blocks>
                    {motion.map(([name, icon], i) => <Block key={i}>{icon}<span>{name}</span></Block>)}
                  </Blocks>
                </Palette>
                <ScrollTrack><ScrollThumb /></ScrollTrack>
                <Program>
                  <FileTab>
                    <svg width="24" height="30" viewBox="0 0 24 30" fill="none" stroke={INK} strokeWidth="2.200">
                      <path d="M3 1.500 H15 L21.500 8 V26.500 Q21.500 28.500 19.500 28.500 H3 Q1.200 28.500 1.200 26.500 V3.500 Q1.200 1.500 3 1.500z" />
                      <path d="M14 1 L22 9 H14z" fill={INK} strokeWidth="1" />
                    </svg>
                    testPTP.lua
                  </FileTab>
                  <Lines>
                    <CodeLine>1<SwapArrow /><b>PTP(ptp01,100,-1,1,0,0,0,0,0,0)</b></CodeLine>
                    <CodeLine>2<SwapArrow /><b>PTP(ptp02,100,-1,1,0,0,0,0,0,0)</b></CodeLine>
                  </Lines>
                </Program>
              </EditorBody>
            </Editor>

            <Viewport>
              <RobotScene />
              <FloatBar $x={281} $y={12} $w={370} $h={62}>
                <Grip />
                <Key $on><KI>{axes(PANEL)}</KI></Key>
                <Key $on><KI>{axes(PANEL)}<path d="M28 8 L37 17" stroke={PANEL} strokeWidth="2.400" /><path d="M25 8 L28 9 L30 7 L28 4 M36 19 L37 16 L40 16 L41 19" stroke={PANEL} strokeWidth="1.800" /></KI></Key>
                <Key>
                  <KI>{axes(ICON_GREY)}<path d="M25 9 L32 12.500 V20 L25 16z M33.500 12.500 L40 9 V16 L33.500 20z M25.500 7.500 L33 4.500 L39.500 7.500 L32.500 11z" fill={ICON_GREY} stroke="none" /></KI>
                </Key>
                <Key>
                  <KI>{axes(ICON_GREY)}<path d="M24.500 8 H27 V18.500 H24.500z M37.500 8 H40 V18.500 H37.500z M28 7 H31.500 V5 H34 V7 H37 V10 H34 V12.500 H31.500 V10 H28z" fill={ICON_GREY} stroke="none" /></KI>
                </Key>
                <Key>
                  <KI><path d="M9 8 C9 18 12 20 18 19 C26 17 35 17 37 33" strokeWidth="2" /><circle cx="9" cy="8" r="4.300" fill={ICON_GREY} stroke="none" /><circle cx="37" cy="36" r="4.300" fill={ICON_GREY} stroke="none" /></KI>
                </Key>
                <KeyRule />
                <Key>
                  <KI w={30} h={40}>
                    <path d="M12.500 1 H17.500 V12 H22 L15 20 L8 12 H12.500z" fill={ICON_GREY} stroke="none" />
                    <path d="M15 23 L4 17.500 V31 L15 36.500 L26 31 V17.500z V36 M4 17.500 L9 14.500 M26 17.500 L21 14.500 M6.500 20 V29.500 L13 33 V24 z M23.500 20 V29.500 L17 33 V24 z" strokeWidth="1.300" />
                  </KI>
                </Key>
              </FloatBar>

              <FloatBar $x={862} $y={68} $w={64} $h={543} $col>
                <Grip $col />
                {sideKeys.map((k, i) => <Key key={i} $tall>{k}</Key>)}
              </FloatBar>

              <FloatBar $x={293} $y={929} $w={344} $h={63}>
                <Grip $gap={11} />
                <Key>
                  <KI w={38} h={38}><g strokeWidth="2"><circle cx="19" cy="19" r="17.500" /><circle cx="19" cy="19" r="10.800" /></g><circle cx="19" cy="19" r="3" fill={ICON_GREY} stroke="none" /><path d="M19 10.500 V27.500 M10.500 19 H27.500" stroke="#168016" strokeWidth="1.500" /></KI>
                </Key>
                <Key><KeyText $sx={0.62}>I/O</KeyText></Key>
                <Key><KeyText $sx={0.63}>TPD</KeyText></Key>
                <Key><GantryKey /></Key>
                <Key><KeyText $sx={0.65}>FT</KeyText></Key>
                <Key><KeyText $sx={0.62}>RCM</KeyText></Key>
              </FloatBar>
            </Viewport>
          </Workspace>
        </Main>

        <PtpDialog />
      </Shell>
    </>
  );
}
